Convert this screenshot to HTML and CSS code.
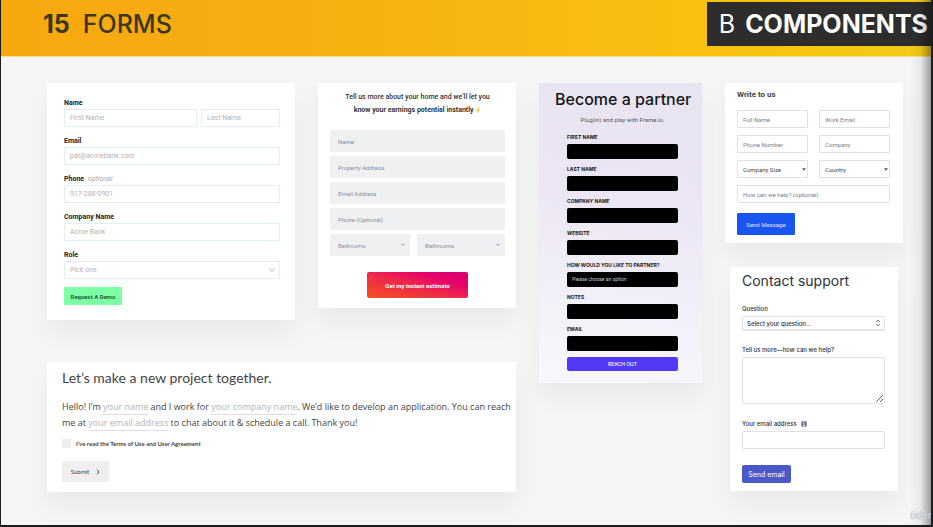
FILE: index.html
```html
<!DOCTYPE html>
<html lang="en">
<head>
<meta charset="utf-8">
<title>15 Forms</title>
<meta name="viewport" content="width=device-width, initial-scale=1">
<link rel="stylesheet" href="styles.css">
</head>
<body>
<header class="banner">
  <h1 class="banner-title"><b>15</b><span>FORMS</span></h1>
  <p class="banner-tag"><span>B</span><b>COMPONENTS</b></p>
</header>
<main class="board">
  <div class="left">
    <form class="card demo">
      <label for="first">Name</label>
      <div class="name-row">
        <input id="first" type="text" placeholder="First Name">
        <input type="text" aria-label="Last name" placeholder="Last Name">
      </div>
      <label for="demo-email">Email</label>
      <input id="demo-email" type="email" placeholder="pat@acmebank.com">
      <label for="demo-phone">Phone <i>optional</i></label>
      <input id="demo-phone" type="tel" placeholder="917-288-0901">
      <label for="demo-company">Company Name</label>
      <input id="demo-company" type="text" placeholder="Acme Bank">
      <label for="role">Role</label>
      <div class="select">
        <select id="role"><option>Pick one</option></select>
        <svg viewBox="0 0 8 6" width="8" height="6"><path d="M1.500 1.200 4 4.600 6.500 1.200"/></svg>
      </div>
      <button type="button">Request A Demo</button>
    </form>

    <form class="card estimate">
      <p class="lead">Tell us more about your home and we’ll let you<br><b>know your earnings potential instantly</b>
        <svg viewBox="0 0 6 8" width="6" height="8"><path d="M4.600.3.500 4.500h2L1.400 7.700 5.600 3.200H3.500z"/></svg></p>
      <div class="stack">
        <input type="text" aria-label="Name" placeholder="Name">
        <input type="text" aria-label="Property address" placeholder="Property Address">
        <input type="email" aria-label="Email address" placeholder="Email Address">
        <input type="tel" aria-label="Phone" placeholder="Phone (Optional)">
        <div class="rooms">
          <div class="select">
            <select aria-label="Bedrooms"><option>Bedrooms</option></select>
            <svg viewBox="0 0 6 4" width="6" height="4"><path d="m1.300.8 1.700 1.700L4.700.8"/></svg>
          </div>
          <div class="select">
            <select aria-label="Bathrooms"><option>Bathrooms</option></select>
            <svg viewBox="0 0 6 4" width="6" height="4"><path d="m1.300.8 1.700 1.700L4.700.8"/></svg>
          </div>
        </div>
      </div>
      <button type="button">Get my instant estimate</button>
    </form>

    <form class="card project">
      <h2>Let’s make a new project together.</h2>
      <p>Hello! I’m <input class="w-name" type="text" aria-label="Your name" placeholder="your name"> and I work for <input class="w-company" type="text" aria-label="Your company name" placeholder="your company name">. We’d like to develop an application. You can reach me at <input class="w-email" type="email" aria-label="Your email address" placeholder="your email address"> to chat about it &amp; schedule a call. Thank you!</p>
      <label class="agree"><input type="checkbox"> I’ve read the Terms of Use and User Agreement</label>
      <button type="button">Submit <svg viewBox="0 0 4 6" width="4" height="6"><path d="m1 .8 2 2.200-2 2.200"/></svg></button>
    </form>
  </div>

  <form class="card partner">
    <h2>Become a partner</h2>
    <p>Plug(in) and play with Frame.io.</p>
    <div class="fields">
      <label for="p-first">First name</label><input id="p-first" type="text">
      <label for="p-last">Last name</label><input id="p-last" type="text">
      <label for="p-company">Company name</label><input id="p-company" type="text">
      <label for="p-site">Website</label><input id="p-site" type="url">
      <label for="p-how">How would you like to partner?</label>
      <select id="p-how"><option>Please choose an option</option></select>
      <label for="p-notes">Notes</label><input id="p-notes" type="text">
      <label for="p-email">Email</label><input id="p-email" type="email">
      <button type="button">REACH OUT</button>
    </div>
  </form>

  <div class="right">
    <form class="card write">
      <h2>Write to us</h2>
      <div class="grid">
        <input type="text" aria-label="Full name" placeholder="Full Name">
        <input type="email" aria-label="Work email" placeholder="Work Email">
        <input type="tel" aria-label="Phone number" placeholder="Phone Number">
        <input type="text" aria-label="Company" placeholder="Company">
        <div class="select">
          <select aria-label="Company size"><option>Company Size</option></select>
          <svg viewBox="0 0 4 3" width="4" height="3"><path d="M0 .3h4L2 2.700z"/></svg>
        </div>
        <div class="select">
          <select aria-label="Country"><option>Country</option></select>
          <svg viewBox="0 0 4 3" width="4" height="3"><path d="M0 .3h4L2 2.700z"/></svg>
        </div>
        <input class="wide" type="text" aria-label="How can we help?" placeholder="How can we help? (optional)">
      </div>
      <button type="button">Send Message</button>
    </form>

    <form class="card support">
      <h2>Contact support</h2>
      <label for="question">Question</label>
      <div class="select">
        <select id="question"><option>Select your question...</option></select>
        <svg viewBox="0 0 6 8" width="6" height="8"><path d="M1.200 3 3 1l1.800 2M1.200 5 3 7l1.800-2"/></svg>
      </div>
      <label for="more">Tell us more—how can we help?</label>
      <textarea id="more"></textarea>
      <label for="s-email">Your email address
        <svg class="info" viewBox="0 0 6 6" width="6" height="6"><rect width="6" height="6" rx="1"/><path d="M2 2.500h1v2M2 4.500h2M2.500 1.300h1"/></svg></label>
      <input id="s-email" type="email">
      <button type="button">Send email</button>
    </form>
  </div>
</main>
<div class="edge"><span>ûdemy</span></div>
</body>
</html>
```
FILE: styles.css
```css
* { box-sizing: border-box; }

html { background: #1b1c1f; }

body {
  position: relative;
  min-height: 100vh;
  margin: 0;
  border: solid #1b1c1f;
  border-width: 0 2px 2px 1px;
  background: #f5f5f5;
  background-clip: padding-box;
  overflow: hidden;
  font: 7px/9px Roboto, "Liberation Sans", sans-serif;
  color: #222;
}

h1, h2, p { margin: 0; font-weight: 400; }

input, select, textarea, button {
  display: block;
  width: 100%;
  min-width: 0;
  margin: 0;
  padding: 0;
  border: 0;
  border-radius: 0;
  font: inherit;
  color: inherit;
  background: none;
  appearance: none;
}

label { display: block; }
svg { fill: none; stroke: currentColor; }

.select { position: relative; }
.select svg {
  position: absolute;
  top: 0;
  bottom: 0;
  right: 4px;
  margin: auto 0;
  pointer-events: none;
}

/* Banner */
.banner {
  display: flex;
  justify-content: space-between;
  align-items: flex-start;
  height: 57px;
  padding: 2px 0 0 42px;
  border-bottom: 1px solid #fbe08a;
  background: linear-gradient(90deg, #f6a90d, #f5ab12 18%, #f5b10f 35%, #f8bd12 65%, #f8c40f 85%, #f3cb16);
  font: 25px/44px Inter, sans-serif;
  color: #3b3721;
}
.banner-title { display: flex; gap: 13px; font-size: 25px; font-weight: 500; }
.banner-tag {
  display: flex;
  gap: 10px;
  padding: 0 3px 0 12px;
  background: #2d2d2d;
  color: #fff;
}

/* Board */
.board {
  display: grid;
  grid-template-columns: minmax(0, 469fr) minmax(0, 163fr) minmax(0, 178fr);
  gap: 23px;
  align-items: start;
  padding: 26px 28px 33px 46px;
}
.left {
  display: grid;
  grid-template-columns: minmax(0, 248fr) minmax(0, 198fr);
  gap: 42px 23px;
  align-items: start;
}
.right { display: grid; gap: 24px; }
.card { background: #fff; box-shadow: 0 14px 24px rgba(0, 0, 0, .05); }

/* Demo request */
.demo { padding: 16px 15px 15px 17px; }
.demo label { margin-bottom: 1px; font-weight: 700; }
.demo i { margin-left: 2px; font-weight: 400; color: #aaa; }
.demo input, .demo select {
  height: 18px;
  padding: 0 5px;
  border: 1px solid #e0f0ee;
  color: #b4b4b4;
}
.demo input { margin-bottom: 10px; }
.demo .select { margin-bottom: 8px; }
.demo .select svg { color: #bbb; }
.demo ::placeholder { color: #b4b4b4; opacity: 1; }
.name-row { display: grid; grid-template-columns: 133fr 79fr; gap: 4px; }
.demo button {
  width: 58px;
  height: 18px;
  background: #7dffa6;
  font-size: 6px;
  font-weight: 700;
  color: #2c5b3c;
}

/* Earnings estimate */
.estimate { padding: 8px 11px 10px 12px; font-size: 6px; color: #8a949c; }
.lead {
  margin-bottom: 13px;
  font-size: 7px;
  line-height: 13px;
  font-weight: 500;
  text-align: center;
  white-space: nowrap;
  color: #333;
}
.lead svg { vertical-align: middle; fill: #f9c846; stroke: none; }
.stack { display: grid; gap: 4px; }
.estimate input, .estimate select {
  height: 22px;
  padding: 0 8px;
  border-radius: 1px;
  background: #eff0f2;
}
.estimate ::placeholder { color: #87929b; opacity: 1; }
.rooms { display: grid; grid-template-columns: 80fr 88fr; gap: 7px; }
.estimate button {
  width: 101px;
  height: 26px;
  margin: 16px auto 0;
  border-radius: 2px;
  background: linear-gradient(15deg, #f5501f, #ee2a4a 45%, #e6006c 75%, #d8006f);
  font-weight: 700;
  color: #fff;
}

/* Project */
.project {
  grid-column: 1 / -1;
  padding: 7px 4px 10px 15px;
  font-family: Lato, sans-serif;
  font-size: 6px;
  color: #444;
}
.project h2 { margin-bottom: 12px; font-size: 14px; line-height: 18px; }
.project p {
  margin-bottom: 8px;
  font: 9px/16px "Open Sans", sans-serif;
}
.project p input {
  display: inline-block;
  height: 15px;
  border-bottom: 1px solid #ddd;
}
.project ::placeholder { color: #b4b4b4; opacity: 1; }
.project .w-name { width: 45px; }
.project .w-company { width: 86px; }
.project .w-email { width: 80px; }
.agree { display: flex; align-items: center; gap: 5px; margin-bottom: 13px; font-weight: 700; }
.agree input { width: 9px; height: 9px; border-radius: 1px; background: #eee; }
.project button {
  display: flex;
  align-items: center;
  justify-content: center;
  gap: 7px;
  width: 47px;
  height: 21px;
  background: #efefef;
}

/* Partner */
.partner {
  padding: 6px 12px 12px 16px;
  background: linear-gradient(190deg, #e9e4f1, #ece6f4 40%, #f2eff8 70%, #f8f8fc);
  color: #161616;
}
.partner h2 {
  margin-bottom: 6px;
  font: 500 16px/20px Inter, sans-serif;
  text-align: center;
  white-space: nowrap;
}
.partner p { margin-bottom: 9px; font-size: 6px; text-align: center; color: #555; }
.fields { padding: 0 12px; font-size: 5px; }
.fields label { margin-bottom: 2px; font-family: Inter, sans-serif; font-weight: 700; text-transform: uppercase; }
.fields input, .fields select {
  height: 15px;
  margin-bottom: 6px;
  padding: 0 5px;
  border-radius: 2px;
  background: #000;
  color: #ccc;
}
.fields button {
  height: 14px;
  border-radius: 2px;
  background: #5338f5;
  font-family: Inter, sans-serif;
  font-weight: 500;
  color: #fff;
}

/* Write to us */
.write { padding: 7px 13px 8px 12px; font-size: 6px; color: #444; }
.write h2 { margin-bottom: 10px; font-size: 8px; line-height: 10px; font-weight: 700; }
.grid { display: grid; grid-template-columns: 1fr 1fr; gap: 7px 11px; }
.write input, .write select {
  height: 18px;
  padding: 0 5px;
  border: 1px solid #dfe1e5;
  border-radius: 1px;
}
.write ::placeholder { color: #7b808a; opacity: 1; }
.write .select svg { right: 2px; fill: #555; stroke: none; }
.write .wide { grid-column: 1 / -1; }
.write button {
  width: 58px;
  height: 22px;
  margin-top: 10px;
  border-radius: 1px;
  background: #1b55f0;
  color: #dce6ff;
}

/* Contact support */
.support {
  margin: 0 5px;
  padding: 4px 13px 8px 12px;
  font-family: Inter, sans-serif;
  font-size: 6px;
  color: #2e3040;
}
.support h2 { margin-bottom: 14px; font-size: 14px; line-height: 19px; }
.support label { margin-bottom: 3px; font-weight: 500; }
.support select, .support textarea, .support input {
  height: 14px;
  padding: 0 4px;
  border: 1px solid #e0e1e4;
  border-radius: 2px;
}
.support select { box-shadow: 0 1px 1px rgba(0, 0, 0, .1); font-weight: 500; }
.support .select { margin-bottom: 15px; }
.support .select svg { color: #777; }
.support textarea { height: 47px; margin-bottom: 15px; resize: vertical; }
.support input { height: 18px; margin-bottom: 16px; }
.info { margin-left: 3px; fill: #5f6780; stroke: #dfe1ea; vertical-align: -1px; }
.support button {
  width: 49px;
  height: 18px;
  border-radius: 2px;
  background: #4b58c8;
  font-size: 7px;
  color: #fff;
}

/* Shade along the right-hand edge */
.edge {
  position: absolute;
  top: 0;
  right: 0;
  bottom: 0;
  display: flex;
  align-items: flex-end;
  width: 21px;
  overflow: hidden;
  background: linear-gradient(90deg, transparent, rgba(0, 0, 0, .06) 50%, rgba(0, 0, 0, .36));
  font: 10px/20px Inter, sans-serif;
  color: #e4e4e4;
  text-shadow: 0 0 1px #888;
  pointer-events: none;
}
```
